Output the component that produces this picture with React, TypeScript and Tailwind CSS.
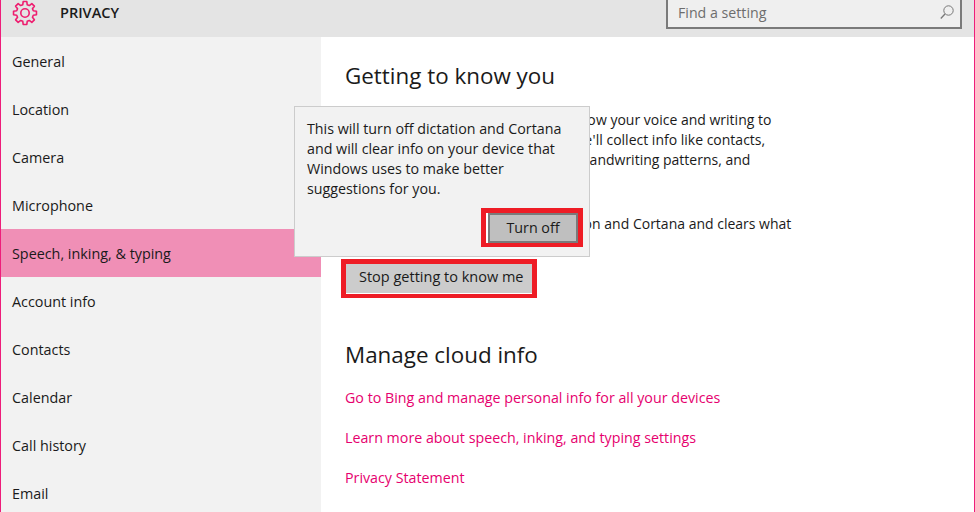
const items = ["General","Location","Camera","Microphone","Speech, inking, & typing","Account info","Contacts","Calendar","Call history","Email"];

function gearPath() {
  const c = 13;
  const pts: string[] = [];
  const at = (r: number, deg: number) => {
    const a = ((deg - 90) * Math.PI) / 180;
    return `${(c + r * Math.cos(a)).toFixed(2)} ${(c + r * Math.sin(a)).toFixed(2)}`;
  };
  for (let i = 0; i < 8; i++) {
    const d = i * 45;
    pts.push(at(8.6, d - 15), at(11.6, d - 9), at(11.6, d + 9), at(8.6, d + 15));
  }
  return "M" + pts.join("L") + "Z";
}

function Gear() {
  return (
    <svg width="26" height="26" viewBox="0 0 26 26" fill="none" stroke="#ee1d6f" strokeWidth="1.6" strokeLinejoin="round">
      <path d={gearPath()} />
      <circle cx="13" cy="13" r="4.2" />
    </svg>
  );
}

function Search() {
  return (
    <svg width="14" height="15" viewBox="0 0 14 15" fill="none" stroke="#777777" strokeWidth="1">
      <circle cx="8.5" cy="5.5" r="4.7" />
      <path d="M5 9L0.8 13.5" strokeWidth="1.3" />
    </svg>
  );
}

export default function App() {
  return (
    <div className="relative h-[512px] w-[975px] overflow-hidden border-x border-[#ee1d7a] bg-white text-[14.2px] text-[#1a1a1a] [font-family:'Open_Sans',sans-serif]">
      <header className="flex h-[37px] items-start justify-between bg-[#e4e4e4] pr-[12px]">
        <div className="flex items-start">
          <div className="ml-[11px]"><Gear /></div>
          <span className="ml-[22px] pt-[3px] leading-[20px] font-semibold text-[14.5px]">PRIVACY</span>
        </div>
        <div className="-mt-[4px] flex h-[33px] w-[296px] items-center justify-between border-2 border-[#7a7a7a] bg-[#efefef] pl-[10px] pr-[6px] text-[#6d6d6d]">
          <span>Find a setting</span>
          <Search />
        </div>
      </header>
      <div className="flex h-[475px]">
        <nav className="w-[320px] shrink-0 bg-[#f2f2f2] text-[14.35px]">
          {items.map((it, i) => (
            <div key={it} className={`flex h-[48px] items-center pl-[11px] pt-[2px] ${i === 4 ? "bg-[#f08fb6]" : ""}`}>{it}</div>
          ))}
        </nav>
        <main className="flex-1 pl-[24px] text-[14px] leading-[20px]">
          <h1 className="mt-[24px] text-[22.4px] leading-[30px]">Getting to know you</h1>
          <p className="mt-[19px] w-[440px]">
            <span className="tracking-[0.33px]">Windows and Cortana can get to kno</span>w your voice and writing to <span className="tracking-[0.25px]">make better suggestions for you. We'</span>ll collect info like contacts, <span className="tracking-[0.05px]">recent calendar events, speech and h</span>andwriting patterns, and typing history.
          </p>
          <p className="mt-[24px] w-[450px]">
            <span className="tracking-[0.15px]">Turning this off also turns off dictatio</span>n and Cortana and clears what this device knows about you.
          </p>
          <div className="mt-[5px] -ml-[4px] inline-block border-[5px] border-b-[4px] border-[#ee1c25] bg-white">
            <button className="mb-[1px] block h-[29px] w-[186px] bg-[#cccccc] pb-[3px] pl-[13px] text-left text-[14.5px]">Stop getting to know me</button>
          </div>
          <h2 className="mt-[42px] text-[22.4px] leading-[30px]">Manage cloud info</h2>
          <div className="mt-[18px] flex flex-col gap-[20px] text-[14.26px] text-[#e6006e]">
            <a>Go to Bing and manage personal info for all your devices</a>
            <a>Learn more about speech, inking, and typing settings</a>
            <a>Privacy Statement</a>
          </div>
        </main>
      </div>
      <div className="absolute left-[293px] top-[106px] h-[151px] w-[296px] border border-[#cccccc] bg-[#f2f2f2] pl-[12px] pr-[6px] pt-[12px] text-[14.28px] leading-[20px]">
        <p>This will turn off dictation and Cortana<br />and will clear info on your device that<br />Windows uses to make better<br />suggestions for you.</p>
        <div className="mt-[9px] flex justify-end">
          <div className="border-[5px] border-b-[4px] border-[#ee1c25] bg-white pl-[2px]">
            <button className="block h-[30px] w-[90px] border-2 border-[#7a7a7a] bg-[#bfbfbf] text-[14.3px]">Turn off</button>
          </div>
        </div>
      </div>
    </div>
  );
}
